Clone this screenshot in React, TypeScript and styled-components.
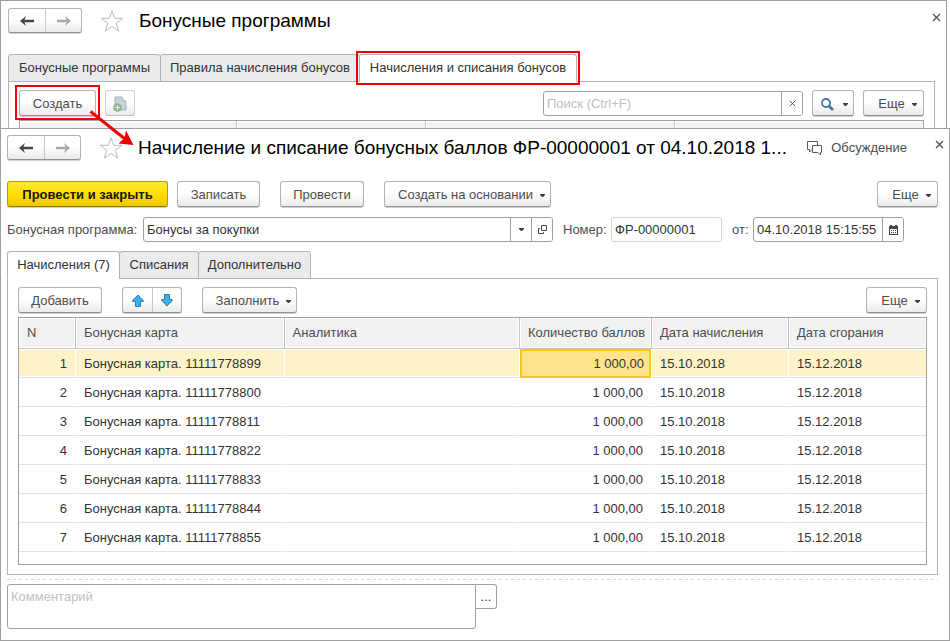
import React from "react";
import styled, { createGlobalStyle, css } from "styled-components";

const GlobalStyle = createGlobalStyle`
  *, *::before, *::after { box-sizing: border-box; }
  body {
    margin: 0;
    background: #fff;
    color: #333;
    font: 13px/16px "Liberation Sans", Arial, sans-serif;
  }
  button, input, textarea { font: inherit; color: inherit; margin: 0; }
  svg { display: block; flex: none; }
`;

const LINE = "#a0a0a0";
const SOFT_LINE = "#b3b3b3";

const Page = styled.div`
  position: relative;
  min-width: 900px;
`;

const Window = styled.section<{ $back?: boolean }>`
  border: 1px solid ${LINE};
  background: #fff;
  padding: ${(p) => (p.$back ? "7px 11px 0 7px" : "6px 11px 11px 6px")};
  ${(p) => p.$back && css`margin-right: 3px; border-bottom: 0;`}
`;

const TitleBar = styled.header`
  display: flex;
  align-items: center;
  height: 25px;
  margin: 0 -7px 21px 0;
`;

const Title = styled.h1`
  flex: 1;
  min-width: 0;
  margin: 0;
  font-size: 19px;
  line-height: 24px;
  font-weight: 400;
  color: #000;
  white-space: nowrap;
`;

const raised = css`
  border: 1px solid ${SOFT_LINE};
  border-bottom-color: #919191;
  border-radius: 3px;
  background: linear-gradient(#fff 45%, #ebebeb);
  box-shadow: 0 1px 0 #d0d0d0;
`;

const ButtonGroup = styled.div<{ $height: number }>`
  ${raised}
  display: flex;
  height: ${(p) => p.$height}px;
`;

const GroupButton = styled.button<{ $width: number }>`
  display: flex;
  align-items: center;
  justify-content: center;
  width: ${(p) => p.$width}px;
  padding: 0;
  border: 0;
  background: none;
  & + & { border-left: 1px solid #c8c8c8; }
`;

const PlainButton = styled.button`
  display: flex;
  align-items: center;
  padding: 0;
  border: 0;
  background: none;
  color: #4d4d4d;
`;

const StarButton = styled(PlainButton)`
  margin: 0 15px 0 18px;
`;

const DiscussButton = styled(PlainButton)`
  gap: 8px;
  margin-right: 28px;
`;

const CloseButton = styled(PlainButton)`
  align-self: flex-start;
  margin: 5px 1px 0 0;
`;

const Button = styled.button<{ $width: number; $primary?: boolean; $faded?: boolean }>`
  ${raised}
  display: flex;
  align-items: center;
  justify-content: center;
  gap: 7px;
  width: ${(p) => p.$width}px;
  height: 26px;
  padding: 2px 0 0;
  color: #4d4d4d;
  white-space: nowrap;
  ${(p) => p.$primary && css`
    border-color: #b39b00;
    border-bottom-color: #8f7c00;
    background: linear-gradient(#ffe838, #ffdf00 50%, #ecc900);
    color: #1a1600;
    font-weight: 700;
  `}
  ${(p) => p.$faded && css`
    border-color: #cfcfcf;
    border-bottom-color: #bdbdbd;
    box-shadow: none;
  `}
`;

const DropButton = styled(Button)`
  padding-left: 8px;
`;

const FindButton = styled(Button)`
  gap: 9px;
  padding-left: 3px;
`;

const Toolbar = styled.div<{ $gap: number }>`
  display: flex;
  align-items: flex-end;
  gap: ${(p) => p.$gap}px;
`;

const Spacer = styled.div`
  flex: 1;
`;

const FormRow = styled.div`
  display: flex;
  align-items: center;
  margin: 10px 34px 9px 0;
  color: #4d4d4d;
  white-space: nowrap;
`;

const Label = styled.label<{ $width: number }>`
  flex: none;
  width: ${(p) => p.$width}px;
`;

const Field = styled.div<{ $width?: number; $light?: boolean; $after?: number }>`
  display: flex;
  height: 25px;
  ${(p) => (p.$width ? `flex: none; width: ${p.$width}px;` : "flex: 1; min-width: 0;")}
  margin-right: ${(p) => p.$after ?? 0}px;
  border: 1px solid ${(p) => (p.$light ? "#d4d4d4" : LINE)};
  border-radius: 3px;
  background: #fff;
  overflow: hidden;
`;

const TextInput = styled.input`
  flex: 1;
  min-width: 0;
  padding: 0 3px;
  border: 0;
  outline: 0;
  background: none;
  color: #333;
  &::placeholder { color: #c0c0c0; opacity: 1; }
`;

const FieldButton = styled.button`
  display: flex;
  align-items: center;
  justify-content: center;
  flex: none;
  width: 21px;
  padding: 0;
  border: 0;
  border-left: 1px solid ${LINE};
  background: #fff;
`;

const Tabs = styled.div`
  display: flex;
  height: 28px;
  margin-bottom: -1px;
`;

const Tab = styled.button<{ $width: number; $active?: boolean }>`
  position: relative;
  width: ${(p) => p.$width}px;
  padding: 0;
  border: 1px solid ${SOFT_LINE};
  border-radius: 3px 3px 0 0;
  background: ${(p) => (p.$active ? "#fff" : "#ebebeb")};
  ${(p) => p.$active && css`border-bottom-color: #fff;`}
  color: #333;
  white-space: nowrap;
  & + & { margin-left: -1px; }
`;

const mark = css<{ $marked?: boolean }>`
  ${(p) => p.$marked && css`
    &::after {
      content: "";
      position: absolute;
      inset: -4px;
      border: 2px solid #f00000;
      pointer-events: none;
    }
  `}
`;

const MarkableTab = styled(Tab)<{ $marked?: boolean }>`
  ${mark}
`;

const MarkableButton = styled(Button)<{ $marked?: boolean }>`
  position: relative;
  ${mark}
  &::after { inset: -6px -5px -5px; }
`;

const Panel = styled.div<{ $open?: boolean }>`
  padding: 8px 10px 9px;
  border: 1px solid ${SOFT_LINE};
  ${(p) => p.$open && css`border-bottom: 0; padding-bottom: 0;`}
`;

const ListHead = styled.div`
  display: grid;
  grid-template-columns: 217fr 189fr 249fr 248fr;
  height: 8px;
  margin-top: 4px;
  border: 1px solid ${LINE};
  border-bottom: 0;
`;

const ListHeadCell = styled.div`
  border: 1px solid #fff;
  border-bottom: 0;
  background: #f2f2f2;
  & + & { box-shadow: -1px 0 0 #c4c4c4; }
`;

const TableFrame = styled.div`
  margin-top: 4px;
  padding-bottom: 12px;
  border: 1px solid ${LINE};
`;

const Table = styled.table`
  width: 100%;
  table-layout: fixed;
  border-collapse: separate;
  border-spacing: 0;
`;

const Col = styled.col<{ $width?: string }>`
  width: ${(p) => p.$width ?? "auto"};
`;

const Th = styled.th`
  height: 31px;
  padding: 0 8px;
  border-right: 1px solid #c4c4c4;
  border-bottom: 1px solid #c4c4c4;
  background: #f2f2f2;
  box-shadow: inset 0 0 0 1px #fff;
  color: #4d4d4d;
  font-weight: 400;
  text-align: left;
  white-space: nowrap;
  &:last-child { border-right: 0; }
`;

const Td = styled.td<{ $right?: boolean; $row?: boolean; $cell?: boolean }>`
  height: 29px;
  padding: 2px 8px 0;
  border-right: 1px solid #fff;
  border-bottom: 1px solid #e2e2e2;
  text-align: ${(p) => (p.$right ? "right" : "left")};
  white-space: nowrap;
  &:last-child { border-right: 0; }
  ${(p) => p.$row && css`
    background: #fef2c8;
    box-shadow: inset 0 1px 0 #fff, inset 0 -1px 0 #fff;
  `}
  ${(p) => p.$cell && css`
    padding: 1px 7px 0;
    background: #ffe48d;
    box-shadow: inset 0 0 0 2px #f8c81c;
    border-bottom: 0;
  `}
`;

const Divider = styled.hr`
  height: 1px;
  margin: 4px 0;
  border: 0;
  background: repeating-linear-gradient(90deg, #d4d4d4 0 3px, transparent 3px 6px);
`;

const CommentRow = styled.div`
  display: flex;
  align-items: flex-start;
`;

const Comment = styled.textarea`
  display: block;
  width: 51%;
  max-width: 469px;
  height: 45px;
  padding: 4px 3px;
  border: 1px solid ${LINE};
  border-radius: 3px 0 3px 3px;
  outline: 0;
  resize: none;
  &::placeholder { color: #c0c0c0; opacity: 1; }
`;

const MoreButton = styled.button`
  width: 21px;
  height: 25px;
  padding: 0;
  border: 1px solid ${LINE};
  border-left: 0;
  border-radius: 0 3px 3px 0;
  background: #fff;
`;

const Pointer = styled.svg`
  position: absolute;
  left: 86px;
  top: 106px;
  pointer-events: none;
`;

const ArrowIcon = ({ right }: { right?: boolean }) => (
  <svg width="14" height="10" viewBox="0 0 14 10" fill={right ? "#a8a8a8" : "#454545"}>
    {right
      ? <path d="M14 5 8 0l1.5 3.8H0v2.4h9.5L8 10z" />
      : <path d="M0 5l6-5-1.5 3.8H14v2.4H4.5L6 10z" />}
  </svg>
);

const StarIcon = () => (
  <svg width="24" height="24" viewBox="0 0 24 24" fill="#fff" stroke="#b4bbc4">
    <path d="M12 1.8l2.7 7.5h8.1l-6.5 4.9 2.4 8L12 17.5l-6.7 4.7 2.4-8-6.5-4.9h8.1z" />
  </svg>
);

const CloseIcon = ({ size = 9 }: { size?: number }) => (
  <svg width={size} height={size} viewBox="0 0 9 9" stroke="#4d4d4d" strokeWidth="1.2">
    <path d="M1 1l7 7M8 1L1 8" />
  </svg>
);

const Caret = () => (
  <svg width="5" height="3" viewBox="0 0 5 3" fill="#404040"><path d="M0 0h5v1L3 3H2L0 1z" /></svg>
);

const CopyIcon = () => (
  <svg width="14" height="16" viewBox="0 0 14 16">
    <path d="M2 1h7l4 4v9H2z" fill="#cbd3da" stroke="#a9b4bd" />
    <path d="M9 1v4h4" fill="#eef1f3" stroke="#a9b4bd" />
    <circle cx="4.5" cy="11.5" r="4.3" fill="#92b493" />
    <path d="M4.5 9v5M2 11.5h5" stroke="#e9f2e9" />
  </svg>
);

const SearchIcon = () => (
  <svg width="13" height="13" viewBox="0 0 13 13" fill="none" stroke="#3a7ba8">
    <circle cx="5" cy="5" r="4" strokeWidth="1.8" />
    <path d="M8 8l4 4" strokeWidth="2.6" />
  </svg>
);

const ChatIcon = () => (
  <svg width="16" height="16" viewBox="0 0 16 16" fill="#fff" stroke="#5a5a5a">
    <path d="M.5 1.5h10v8H5L2.5 12V9.5h-2z" />
    <path d="M5.5 5.5h9v7h-1V15L11 12.5H5.5z" />
  </svg>
);

const OpenIcon = () => (
  <svg width="9" height="9" viewBox="0 0 9 9" fill="none" stroke="#454545">
    <path d="M3.5.5h5v5h-5zM2 3.5H.5v5h5V7" />
  </svg>
);

const CalendarIcon = () => (
  <svg width="9" height="10" viewBox="0 0 9 10">
    <path d="M0 1h1V0h2v1h3V0h2v1h1v9H0z" fill="#454545" />
    <path d="M1 4h7v5H1z" fill="#fff" />
    <path d="M2 5.5h5M2 7.5h5" stroke="#454545" strokeDasharray="1 1" />
  </svg>
);

const MoveIcon = ({ down }: { down?: boolean }) => (
  <svg width="12" height="13" viewBox="0 0 12 13" fill="#42aee8" stroke="#2f7fb0">
    {down
      ? <path d="M3.5.5h5v5h2.8v1L6 12 .7 6.500v-1h2.800z" />
      : <path d="M3.5 12.5h5v-5h2.800v-1L6 1 .7 6.500v1h2.800z" />}
  </svg>
);

const NavButtons = () => (
  <ButtonGroup $height={25}>
    <GroupButton $width={36} aria-label="Назад"><ArrowIcon /></GroupButton>
    <GroupButton $width={36} aria-label="Вперед"><ArrowIcon right /></GroupButton>
  </ButtonGroup>
);

const WindowTitle = ({ text, children }: { text: string; children?: React.ReactNode }) => (
  <TitleBar>
    <NavButtons />
    <StarButton aria-label="В избранное"><StarIcon /></StarButton>
    <Title>{text}</Title>
    {children}
    <CloseButton aria-label="Закрыть"><CloseIcon /></CloseButton>
  </TitleBar>
);

const More = () => <DropButton $width={61}>Еще <Caret /></DropButton>;

const cards = ["99", "00", "11", "22", "33", "44", "55"].map((end) => `Бонусная карта. 111117788${end}`);

export default function App() {
  return (
    <Page>
      <GlobalStyle />
      <Window $back>
        <WindowTitle text="Бонусные программы" />
        <Tabs role="tablist">
          <MarkableTab role="tab" $width={153}>Бонусные программы</MarkableTab>
          <MarkableTab role="tab" $width={200}>Правила начисления бонусов</MarkableTab>
          <MarkableTab role="tab" aria-selected $width={218} $active $marked>
            Начисления и списания бонусов
          </MarkableTab>
        </Tabs>
        <Panel $open>
          <Toolbar $gap={9}>
            <MarkableButton $width={77} $marked>Создать</MarkableButton>
            <Button $width={30} $faded aria-label="Создать копированием"><CopyIcon /></Button>
            <Spacer />
            <Field $width={260}>
              <TextInput aria-label="Поиск" placeholder="Поиск (Ctrl+F)" />
              <FieldButton aria-label="Очистить"><CloseIcon size={7} /></FieldButton>
            </Field>
            <FindButton $width={42} aria-label="Найти"><SearchIcon /><Caret /></FindButton>
            <More />
          </Toolbar>
          <ListHead>
            <ListHeadCell /><ListHeadCell /><ListHeadCell /><ListHeadCell />
          </ListHead>
        </Panel>
      </Window>

      <Window>
        <WindowTitle text="Начисление и списание бонусных баллов ФР-00000001 от 04.10.2018 1...">
          <DiscussButton><ChatIcon />Обсуждение</DiscussButton>
        </WindowTitle>
        <Toolbar $gap={20}>
          <Toolbar $gap={9}>
            <Button $width={161} $primary>Провести и закрыть</Button>
            <Button $width={83}>Записать</Button>
          </Toolbar>
          <Button $width={84}>Провести</Button>
          <DropButton $width={167}>Создать на основании <Caret /></DropButton>
          <Spacer />
          <More />
        </Toolbar>
        <FormRow>
          <Label htmlFor="program" $width={136}>Бонусная программа:</Label>
          <Field $after={10}>
            <TextInput id="program" defaultValue="Бонусы за покупки" />
            <FieldButton aria-label="Выбрать"><Caret /></FieldButton>
            <FieldButton aria-label="Открыть"><OpenIcon /></FieldButton>
          </Field>
          <Label htmlFor="number" $width={48}>Номер:</Label>
          <Field $width={111} $light $after={10}>
            <TextInput id="number" defaultValue="ФР-00000001" />
          </Field>
          <Label htmlFor="date" $width={21}>от:</Label>
          <Field $width={151}>
            <TextInput id="date" defaultValue="04.10.2018 15:15:55" />
            <FieldButton aria-label="Календарь"><CalendarIcon /></FieldButton>
          </Field>
        </FormRow>
        <Tabs role="tablist">
          <Tab role="tab" aria-selected $width={113} $active>Начисления (7)</Tab>
          <Tab role="tab" $width={80}>Списания</Tab>
          <Tab role="tab" $width={113}>Дополнительно</Tab>
        </Tabs>
        <Panel>
          <Toolbar $gap={20}>
            <Button $width={84}>Добавить</Button>
            <ButtonGroup $height={26}>
              <GroupButton $width={29} aria-label="Вверх"><MoveIcon /></GroupButton>
              <GroupButton $width={29} aria-label="Вниз"><MoveIcon down /></GroupButton>
            </ButtonGroup>
            <DropButton $width={95}>Заполнить <Caret /></DropButton>
            <Spacer />
            <More />
          </Toolbar>
          <TableFrame>
            <Table>
              <colgroup>
                <Col $width="57px" /><Col $width="23%" /><Col />
                <Col $width="132px" /><Col $width="137px" /><Col $width="137px" />
              </colgroup>
              <thead>
                <tr>
                  <Th>N</Th><Th>Бонусная карта</Th><Th>Аналитика</Th>
                  <Th>Количество баллов</Th><Th>Дата начисления</Th><Th>Дата сгорания</Th>
                </tr>
              </thead>
              <tbody>
                {cards.map((card, i) => (
                  <tr key={card}>
                    <Td $right $row={i === 0}>{i + 1}</Td>
                    <Td $row={i === 0}>{card}</Td>
                    <Td $row={i === 0} />
                    <Td $right $cell={i === 0}>1 000,00</Td>
                    <Td $row={i === 0}>15.10.2018</Td>
                    <Td $row={i === 0}>15.12.2018</Td>
                  </tr>
                ))}
              </tbody>
            </Table>
          </TableFrame>
        </Panel>
        <Divider />
        <CommentRow>
          <Comment aria-label="Комментарий" placeholder="Комментарий" />
          <MoreButton aria-label="Открыть комментарий">...</MoreButton>
        </CommentRow>
      </Window>

      <Pointer width="50" height="42" viewBox="86 106 50 42">
        <path d="M90.5 111.5L125 139" stroke="#f00000" strokeWidth="3" fill="none" />
        <path d="M133.5 145l-7.500-14.500-1.500 7.500-6 5.500z" fill="#f00000" />
      </Pointer>
    </Page>
  );
}
